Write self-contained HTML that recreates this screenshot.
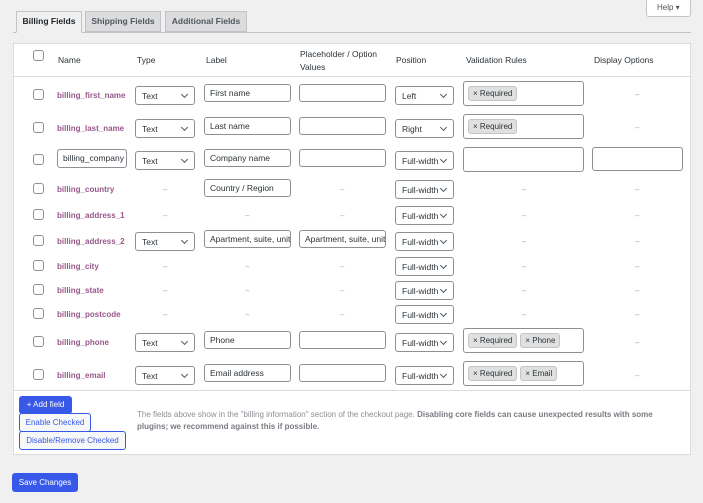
<!DOCTYPE html>
<html><head><meta charset="utf-8"><style>
*{box-sizing:border-box;margin:0;padding:0}
body{width:703px;height:503px;background:#f0f0f1;font-family:"Liberation Sans",sans-serif;font-size:8.5px;color:#3c434a;position:relative;overflow:hidden}
.a{position:absolute}
.tab{position:absolute;top:11px;height:21px;border:1px solid #c3c4c7;background:#dcdcde;font-weight:bold;font-size:8.5px;color:#50575e;line-height:19px;text-align:center}
.panel{position:absolute;left:13px;top:43px;width:678px;height:412px;background:#fff;border:1px solid #dcdcde}
.cb{position:absolute;left:33px;width:11px;height:11px;border:1px solid #8c8f94;border-radius:3px;background:#fff}
.nm{position:absolute;left:57px;color:#96588a;font-weight:bold;font-size:8px;margin-top:2px}
.sel{position:absolute;height:19px;border:1px solid #8c8f94;border-radius:3px;background:#fff;padding-left:6px;line-height:18px;font-size:8.5px;color:#2c3338}
.sel:after{content:"";position:absolute;right:7px;top:5px;width:4px;height:4px;border-right:1px solid #50575e;border-bottom:1px solid #50575e;transform:rotate(45deg)}
.inp{position:absolute;height:18px;border:1px solid #8c8f94;border-radius:3px;background:#fff;padding-left:5px;line-height:16px;font-size:8.5px;color:#2c3338;overflow:hidden;white-space:nowrap}
.d{position:absolute;color:#a7aaad;font-size:8px;margin-top:2px}
.vb{position:absolute;left:463px;width:121px;height:25px;border:1px solid #8c8f94;border-radius:3px;background:#fff}
.tag{display:inline-block;margin:4px 0 0 4px;height:15px;line-height:13px;padding:0 4px;border:1px solid #c3c4c7;border-radius:3px;background:#e0e0e0;font-size:8px;color:#2c3338}
.tag+.tag{margin-left:3px}
.h{position:absolute;top:55px;font-size:8.5px;color:#2c3338}
.btn{position:absolute;border:1px solid #3858e9;border-radius:3px;background:#f6f7f7;color:#3858e9;font-size:8px;text-align:center}
.pb{position:absolute;background:#3858e9;color:#fff;border-radius:3px;font-size:8px;text-align:center}
</style></head><body>
<div class="a" style="left:646px;top:0;width:45px;height:17px;background:#fff;border:1px solid #c3c4c7;border-top:none;border-radius:0 0 3px 3px;font-size:8px;line-height:16px;padding-left:10px;color:#50575e">Help ▾</div>
<div class="a" style="left:13px;top:32px;width:678px;height:1px;background:#c3c4c7"></div>
<div class="tab" style="left:16px;width:66px;background:#f0f0f1;border-bottom-color:#f0f0f1;color:#1d2327;height:22px">Billing Fields</div>
<div class="tab" style="left:85px;width:76px">Shipping Fields</div>
<div class="tab" style="left:165px;width:82px">Additional Fields</div>
<div class="panel"></div>
<div class="a" style="left:14px;top:76px;width:676px;height:1px;background:#dcdcde"></div>
<div class="a" style="left:14px;top:390px;width:676px;height:1px;background:#dcdcde"></div>
<div class="cb" style="top:50px"></div>
<div class="h" style="left:58px">Name</div>
<div class="h" style="left:137px">Type</div>
<div class="h" style="left:206px">Label</div>
<div class="h" style="left:300px;top:48px;line-height:13px">Placeholder / Option<br>Values</div>
<div class="h" style="left:396px">Position</div>
<div class="h" style="left:466px">Validation Rules</div>
<div class="h" style="left:594px">Display Options</div>

<!-- row1 -->
<div class="cb" style="top:89px"></div><div class="nm" style="top:89px">billing_first_name</div>
<div class="sel" style="left:135px;top:86px;width:60px">Text</div>
<div class="inp" style="left:204px;top:84px;width:87px">First name</div>
<div class="inp" style="left:299px;top:84px;width:87px"></div>
<div class="sel" style="left:395px;top:86px;width:59px">Left</div>
<div class="vb" style="top:81px"><span class="tag">× Required</span></div>
<div class="d" style="left:635px;top:88px">–</div>
<!-- row2 -->
<div class="cb" style="top:122px"></div><div class="nm" style="top:122px">billing_last_name</div>
<div class="sel" style="left:135px;top:119px;width:60px">Text</div>
<div class="inp" style="left:204px;top:117px;width:87px">Last name</div>
<div class="inp" style="left:299px;top:117px;width:87px"></div>
<div class="sel" style="left:395px;top:119px;width:59px">Right</div>
<div class="vb" style="top:114px"><span class="tag">× Required</span></div>
<div class="d" style="left:635px;top:121px">–</div>
<!-- row3 -->
<div class="cb" style="top:154px"></div>
<div class="inp" style="left:57px;top:149px;width:70px;height:19px">billing_company</div>
<div class="sel" style="left:135px;top:151px;width:60px">Text</div>
<div class="inp" style="left:204px;top:149px;width:87px">Company name</div>
<div class="inp" style="left:299px;top:149px;width:87px"></div>
<div class="sel" style="left:395px;top:151px;width:59px">Full-width</div>
<div class="vb" style="top:147px"></div>
<div class="inp" style="left:592px;top:147px;width:91px;height:24px"></div>
<!-- row4 -->
<div class="cb" style="top:183px"></div><div class="nm" style="top:183px">billing_country</div>
<div class="d" style="left:163px;top:183px">–</div>
<div class="inp" style="left:204px;top:179px;width:87px">Country / Region</div>
<div class="d" style="left:340px;top:183px">–</div>
<div class="sel" style="left:395px;top:180px;width:59px">Full-width</div>
<div class="d" style="left:522px;top:183px">–</div><div class="d" style="left:635px;top:183px">–</div>
<!-- row5 -->
<div class="cb" style="top:209px"></div><div class="nm" style="top:209px">billing_address_1</div>
<div class="d" style="left:163px;top:209px">–</div><div class="d" style="left:245px;top:209px">–</div><div class="d" style="left:340px;top:209px">–</div>
<div class="sel" style="left:395px;top:206px;width:59px">Full-width</div>
<div class="d" style="left:522px;top:209px">–</div><div class="d" style="left:635px;top:209px">–</div>
<!-- row6 -->
<div class="cb" style="top:235px"></div><div class="nm" style="top:235px">billing_address_2</div>
<div class="sel" style="left:135px;top:232px;width:60px">Text</div>
<div class="inp" style="left:204px;top:230px;width:87px">Apartment, suite, unit</div>
<div class="inp" style="left:299px;top:230px;width:87px">Apartment, suite, unit</div>
<div class="sel" style="left:395px;top:232px;width:59px">Full-width</div>
<div class="d" style="left:522px;top:235px">–</div><div class="d" style="left:635px;top:235px">–</div>
<!-- row7 -->
<div class="cb" style="top:260px"></div><div class="nm" style="top:260px">billing_city</div>
<div class="d" style="left:163px;top:260px">–</div><div class="d" style="left:245px;top:260px">–</div><div class="d" style="left:340px;top:260px">–</div>
<div class="sel" style="left:395px;top:257px;width:59px">Full-width</div>
<div class="d" style="left:522px;top:260px">–</div><div class="d" style="left:635px;top:260px">–</div>
<!-- row8 -->
<div class="cb" style="top:284px"></div><div class="nm" style="top:284px">billing_state</div>
<div class="d" style="left:163px;top:284px">–</div><div class="d" style="left:245px;top:284px">–</div><div class="d" style="left:340px;top:284px">–</div>
<div class="sel" style="left:395px;top:281px;width:59px">Full-width</div>
<div class="d" style="left:522px;top:284px">–</div><div class="d" style="left:635px;top:284px">–</div>
<!-- row9 -->
<div class="cb" style="top:308px"></div><div class="nm" style="top:308px">billing_postcode</div>
<div class="d" style="left:163px;top:308px">–</div><div class="d" style="left:245px;top:308px">–</div><div class="d" style="left:340px;top:308px">–</div>
<div class="sel" style="left:395px;top:305px;width:59px">Full-width</div>
<div class="d" style="left:522px;top:308px">–</div><div class="d" style="left:635px;top:308px">–</div>
<!-- row10 -->
<div class="cb" style="top:336px"></div><div class="nm" style="top:336px">billing_phone</div>
<div class="sel" style="left:135px;top:333px;width:60px">Text</div>
<div class="inp" style="left:204px;top:331px;width:87px">Phone</div>
<div class="inp" style="left:299px;top:331px;width:87px"></div>
<div class="sel" style="left:395px;top:333px;width:59px">Full-width</div>
<div class="vb" style="top:328px"><span class="tag">× Required</span><span class="tag">× Phone</span></div>
<div class="d" style="left:635px;top:336px">–</div>
<!-- row11 -->
<div class="cb" style="top:369px"></div><div class="nm" style="top:369px">billing_email</div>
<div class="sel" style="left:135px;top:366px;width:60px">Text</div>
<div class="inp" style="left:204px;top:364px;width:87px">Email address</div>
<div class="inp" style="left:299px;top:364px;width:87px"></div>
<div class="sel" style="left:395px;top:366px;width:59px">Full-width</div>
<div class="vb" style="top:361px"><span class="tag">× Required</span><span class="tag">× Email</span></div>
<div class="d" style="left:635px;top:369px">–</div>

<div class="pb" style="left:19px;top:396px;width:53px;height:18px;line-height:18px">+ Add field</div>
<div class="btn" style="left:19px;top:413px;width:72px;height:19px;line-height:17px">Enable Checked</div>
<div class="btn" style="left:19px;top:431px;width:107px;height:19px;line-height:17px">Disable/Remove Checked</div>
<div class="a" style="left:137px;top:409px;width:535px;font-size:8px;line-height:12px;color:#8c8f94">The fields above show in the "billing information" section of the checkout page. <b style="color:#787c82">Disabling core fields can cause unexpected results with some plugins; we recommend against this if possible.</b></div>
<div class="pb" style="left:12px;top:473px;width:66px;height:19px;line-height:19px">Save Changes</div>
</body></html>
